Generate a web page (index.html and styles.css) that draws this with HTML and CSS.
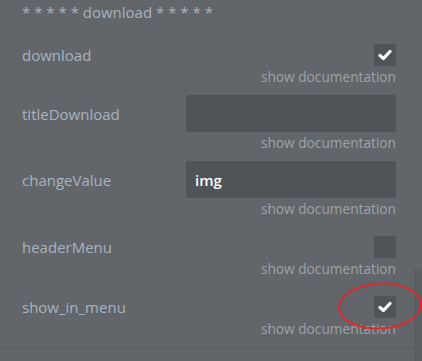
FILE: index.html
```html
<!DOCTYPE html>
<html lang="en">
<head>
  <meta charset="UTF-8">
  <meta name="viewport" content="width=device-width, initial-scale=1.0">
  <title>Properties</title>
  <link rel="stylesheet" href="styles.css">
</head>
<body>
  <div class="Frame">
    <div class="Props">
      <div class="Heading">* * * * * download * * * * *</div>

      <div class="Field checkField">
        <div class="FieldRow">
          <span class="Label">download</span>
          <span class="Check on">
            <svg viewBox="0 0 14 12" width="14" height="12"><polyline points="2,6.5 5.5,9.5 12,2.5" /></svg>
          </span>
        </div>
        <div class="Doc">show documentation</div>
      </div>

      <div class="Field textField">
        <div class="FieldRow">
          <span class="Label">titleDownload</span>
          <input class="TextBox" type="text" value="">
        </div>
        <div class="Doc">show documentation</div>
      </div>

      <div class="Field textField">
        <div class="FieldRow">
          <span class="Label">changeValue</span>
          <input class="TextBox" type="text" value="img">
        </div>
        <div class="Doc">show documentation</div>
      </div>

      <div class="Field checkField">
        <div class="FieldRow">
          <span class="Label">headerMenu</span>
          <span class="Check"></span>
        </div>
        <div class="Doc">show documentation</div>
      </div>

      <div class="Field checkField">
        <div class="FieldRow">
          <span class="Label">show_in_menu</span>
          <span class="Check on marked">
            <svg viewBox="0 0 14 12" width="14" height="12"><polyline points="2,6.5 5.5,9.5 12,2.5" /></svg>
            <svg class="Circle" viewBox="0 0 84 48" width="84" height="48"><ellipse cx="42" cy="24" rx="41" ry="22.5" transform="rotate(-3 42 24)" /></svg>
          </span>
        </div>
        <div class="Doc">show documentation</div>
      </div>

      <div class="Divider"></div>
    </div>
    <div class="ScrollTrack">
      <div class="ScrollThumb"></div>
    </div>
  </div>
</body>
</html>
```

FILE: styles.css
```css
body{
  margin: 0;
  background-color: #62666a;
  font-family: "Open Sans", "Liberation Sans", sans-serif;
  overflow: hidden;
}
.Frame{
  display: flex;
  height: 361px;
}
.Props{
  flex: 1;
  padding: 2px 18px 0 22px;
}
.Heading{
  font-size: 15px;
  line-height: 20px;
  color: #a7b3bd;
}
.Field{
  margin-top: 10px;
}
.checkField{
  margin-top: 19px;
}
.Heading + .Field{
  margin-top: 22px;
}
.FieldRow{
  display: flex;
  align-items: center;
  justify-content: space-between;
}
.Label{
  font-size: 15px;
  color: #a7b3bd;
}
.TextBox{
  width: 210px;
  height: 37px;
  box-sizing: border-box;
  border: none;
  border-radius: 2px;
  background-color: #505458;
  color: #ffffff;
  font-family: "Open Sans", "Liberation Sans", sans-serif;
  font-size: 15px;
  font-weight: 600;
  padding: 0 9px;
  outline: none;
}
.Check{
  position: relative;
  width: 22px;
  height: 22px;
  border-radius: 2px;
  background-color: #505458;
  display: flex;
  align-items: center;
  justify-content: center;
}
.Check polyline{
  fill: none;
  stroke: #ffffff;
  stroke-width: 3.2;
  stroke-linecap: round;
  stroke-linejoin: round;
}
.Circle{
  position: absolute;
  left: -36px;
  top: -14px;
}
.Circle ellipse{
  fill: none;
  stroke: #e3262c;
  stroke-width: 1.8;
}
.Doc{
  margin-top: 3px;
  text-align: right;
  font-size: 13.7px;
  line-height: 16px;
  color: #9ea2a6;
}
.Divider{
  margin: 10px -18px 0 -22px;
  border-top: 1px solid #575b5f;
}
.ScrollTrack{
  width: 8px;
}
.ScrollThumb{
  margin-top: 269px;
  height: 92px;
  background-color: #5c6064;
  border-left: 1px solid #585c60;
}
```
